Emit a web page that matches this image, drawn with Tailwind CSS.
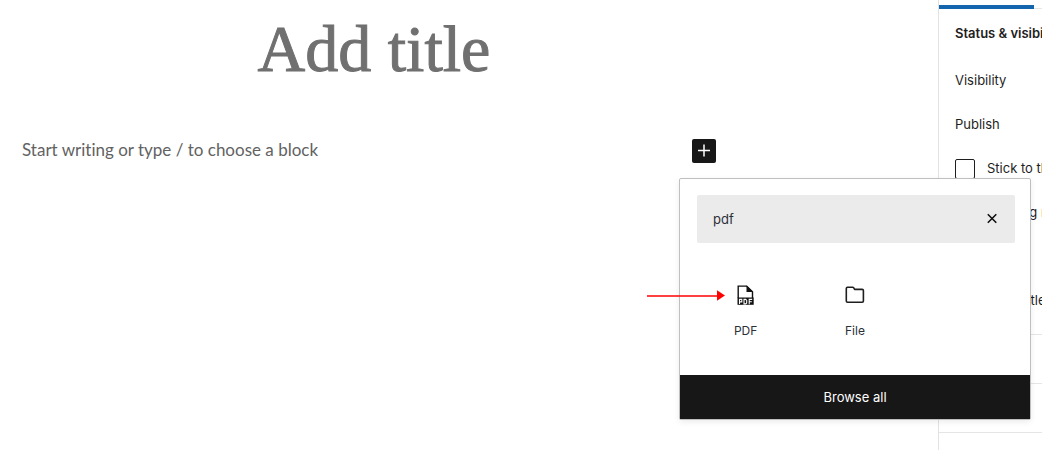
<!DOCTYPE html>
<html lang="en">
<head>
<meta charset="utf-8">
<meta name="viewport" content="width=device-width, initial-scale=1">
<title>Add new post</title>
<script src="https://cdn.jsdelivr.net/npm/@tailwindcss/browser@4"></script>
</head>
<body class="bg-white font-['Inter',sans-serif] text-[13px] text-[#1e1e1e]">
<div class="flex min-h-screen overflow-hidden">
  <main class="min-w-0 flex-1 pl-[22px]">
    <div class="mr-[212px]">
      <h1 class="pt-2 text-center font-['Liberation_Serif',serif] text-[66px] leading-[82px] text-[#707070] [-webkit-text-stroke:1px_#707070]">Add title</h1>
    </div>
    <div class="mt-[49px] mr-[222px] flex items-start justify-between">
      <p class="font-['Lato',sans-serif] text-[17px] leading-[22px] text-[#626262] [font-variant-ligatures:none]">Start writing or type / to choose a block</p>
      <div class="relative size-6">
        <button type="button" aria-label="Add block" class="flex size-6 items-center justify-center rounded-[2px] bg-[#171717] text-white">
          <svg class="size-6" viewBox="0 0 24 24" fill="none" stroke="currentColor" stroke-width="1.5"><path d="M12 5.500v12M6 11.500h12"/></svg>
        </button>

        <section aria-label="Block inserter" class="absolute top-[39px] -left-[13px] z-10 w-[352px] rounded-[2px] border border-[#bfbfbf] bg-white shadow-[0_2px_6px_rgba(0,0,0,0.08)]">
          <div class="mt-4 mr-[15px] mb-4 ml-[17px] flex h-12 items-center rounded-[2px] bg-[#ebebeb] pr-[11px] pl-4">
            <input type="text" value="pdf" aria-label="Search for a block" class="min-w-0 flex-1 bg-transparent pt-px text-[13px] text-[#2c3038] outline-none">
            <button type="button" aria-label="Reset search" class="flex size-6 items-center justify-center">
              <svg class="size-6" viewBox="0 0 24 24" fill="none" stroke="#111" stroke-width="1.6"><path d="M7.800 7.200l8.500 8.500M16.300 7.200l-8.500 8.500"/></svg>
            </button>
          </div>
          <div class="grid grid-cols-3 px-[11px] pt-6 pb-8 text-[12px] text-[#2c3038]">
            <button type="button" class="flex flex-col items-center gap-3">
              <svg class="size-6" viewBox="0 0 24 24" fill="none">
                <path d="M4.200 15V3.100h8.500l5.800 5.800V15" stroke="#111" stroke-width="1.400"/>
                <path d="M12.500 2.500l6.600 6.600h-6.600z" fill="#111"/>
                <path d="M3.500 14.500h16.200v7.300H3.500z" fill="#111"/>
                <path d="M5.500 20.900v-4.500h2.300v2.500H5.500M10 16.400h1.700l1 1v2.500l-1 1H10zM15.200 21.200v-4.800h3M15.200 18.700h2.600" stroke="#fff" stroke-width="1.100"/>
              </svg>
              <span class="leading-6">PDF</span>
            </button>
            <button type="button" class="flex flex-col items-center gap-3">
              <svg class="size-6" viewBox="0 0 24 24" fill="none" stroke="#1e1e1e" stroke-width="1.600" stroke-linejoin="round"><path d="M4.500 4.200h5.200c.4 0 .7.200.9.500l1 1.700h7.600c.7 0 1.200.5 1.200 1.200v10.500c0 .7-.5 1.200-1.200 1.200H4.500c-.7 0-1.200-.5-1.200-1.200V5.400c0-.7.5-1.200 1.200-1.200z"/></svg>
              <span class="leading-6">File</span>
            </button>
          </div>
          <button type="button" class="block h-11 w-full bg-[#171717] pt-px text-center text-[13px] text-white">Browse all</button>
        </section>

        <svg class="absolute top-[151px] -left-[45px] z-20 h-3 w-[78px]" viewBox="0 0 78 12" aria-hidden="true"><path d="M0 6h71" stroke="#f00" stroke-width="1.700"/><path d="M70 .3L78 5.500l-8 5.200z" fill="#f00"/></svg>
      </div>
    </div>
  </main>

  <aside class="w-[104px] shrink-0 overflow-hidden border-l border-[#e2e2e2] pt-[5px] whitespace-nowrap">
    <div class="flex h-1 items-end">
      <div class="h-1 w-[95px] shrink-0 bg-[#1366ad]"></div>
      <div class="h-px flex-1 bg-[#e6e6e6]"></div>
    </div>
    <div class="border-b border-[#e5e5e5] pl-4">
      <h2 class="flex h-[50px] items-center font-semibold">Status &amp; visibility</h2>
      <p class="flex h-11 items-center">Visibility</p>
      <p class="flex h-11 items-center">Publish</p>
      <label class="flex h-11 items-center gap-3"><input type="checkbox" class="size-5 shrink-0 appearance-none rounded-[2px] border border-[#1e1e1e]">Stick to the top of the blog</label>
      <label class="flex h-11 items-center gap-3"><input type="checkbox" class="size-5 shrink-0 appearance-none rounded-[2px] border border-[#1e1e1e]">Pending review</label>
      <label class="mt-11 flex h-11 items-center gap-3"><input type="checkbox" class="size-5 shrink-0 appearance-none rounded-[2px] border border-[#1e1e1e]">Hide Title</label>
      <div class="h-[11px]"></div>
    </div>
    <div class="h-[49px] border-b border-[#e5e5e5]"></div>
    <div class="h-[49px] border-b border-[#e5e5e5]"></div>
  </aside>
</div>
</body>
</html>
